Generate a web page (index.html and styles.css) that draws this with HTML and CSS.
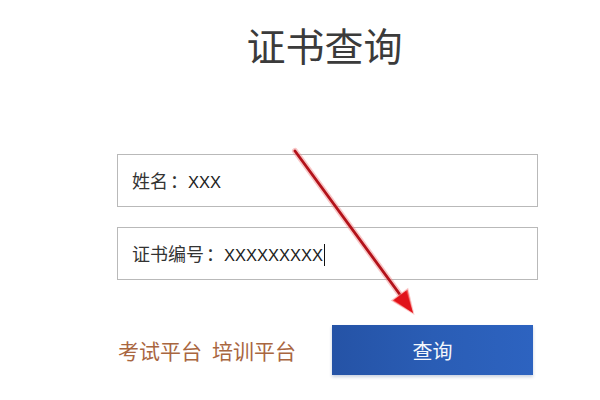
FILE: index.html
```html
<!DOCTYPE html>
<html lang="zh-CN">
<head>
<meta charset="utf-8">
<title>证书查询</title>
<link rel="stylesheet" href="styles.css">
</head>
<body>
<div class="page">
  <div class="panel">
    <h1 class="title">证书查询</h1>
    <div class="field field-first"><span class="label">姓名<span class="colon">：</span></span><span class="value">XXX</span></div>
    <div class="field"><span class="label">证书编号<span class="colon">：</span></span><span class="value">XXXXXXXXX</span><span class="caret"></span></div>
    <div class="actions">
      <div class="links"><a class="link" href="#">考试平台</a><a class="link" href="#">培训平台</a></div>
      <button class="btn" type="button">查询</button>
    </div>
  </div>
  <svg class="arrow" width="600" height="400" viewBox="0 0 600 400">
    <line x1="295" y1="151" x2="401" y2="296" stroke="#f08080" stroke-opacity="0.45" stroke-width="6" stroke-linecap="round"/>
    <line x1="295" y1="151" x2="401" y2="296" stroke="#b3121a" stroke-width="2.8" stroke-linecap="round"/>
    <polygon points="413,313 392.5,300.5 407.5,289.5" fill="#f02020" stroke="#f58a8a" stroke-opacity="0.5" stroke-width="2"/>
    <polygon points="413,313 394,300 406,291" fill="#e0121a"/>
  </svg>
</div>
</body>
</html>
```
FILE: styles.css
```css
html, body {
  margin: 0;
  padding: 0;
  background: #ffffff;
}
.page {
  position: relative;
  width: 600px;
  height: 400px;
  overflow: hidden;
  font-family: "Liberation Sans", "Noto Sans CJK SC", sans-serif;
}
.panel {
  margin-left: 117px;
  width: 421px;
  padding-top: 20px;
}
.title {
  margin: 0 0 86px 0;
  text-align: center;
  font-family: "Noto Sans CJK SC", sans-serif;
  font-weight: 400;
  font-size: 39px;
  line-height: 48px;
  color: #3b3b3b;
  padding-right: 6px;
}
.field {
  box-sizing: border-box;
  height: 53px;
  border: 1px solid #b9b9b9;
  padding-left: 14px;
  line-height: 51px;
  font-size: 18px;
  color: #2e2e2e;
  margin-top: 20px;
  white-space: nowrap;
}
.field-first {
  margin-top: 0;
}
.label {
  font-family: "Noto Sans CJK SC", sans-serif;
  font-size: 18px;
  color: #333333;
}
.colon {
  padding-left: 2px;
}
.value {
  font-family: "Liberation Sans", sans-serif;
  font-size: 16.5px;
  color: #222222;
}
.caret {
  display: inline-block;
  width: 1px;
  height: 22px;
  background: #111;
  margin-left: 1px;
  vertical-align: -5px;
}
.actions {
  display: flex;
  align-items: center;
  margin-top: 45px;
}
.links {
  display: flex;
  gap: 10px;
  padding-left: 1px;
}
.link {
  font-family: "Noto Sans CJK SC", sans-serif;
  font-size: 21px;
  color: #a9663f;
  text-decoration: none;
}
.btn {
  margin-left: auto;
  margin-right: 5px;
  width: 201px;
  height: 50px;
  border: none;
  background: linear-gradient(90deg, #2553a6 0%, #2a5db5 50%, #2d63c0 100%);
  color: #f4f7fc;
  font-family: "Noto Sans CJK SC", sans-serif;
  font-size: 20px;
  box-shadow: 0 2px 3px rgba(40, 70, 130, 0.25);
  padding: 0;
}
.arrow {
  position: absolute;
  left: 0;
  top: 0;
  pointer-events: none;
}
```
